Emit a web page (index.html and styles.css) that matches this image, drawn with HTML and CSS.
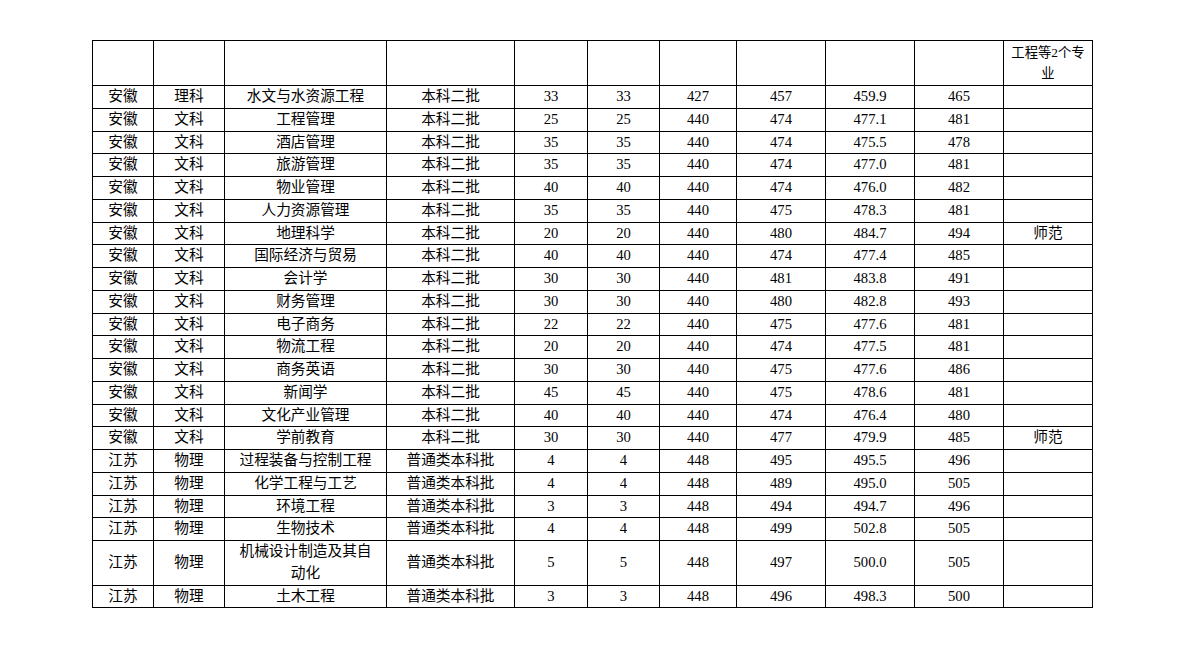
FILE: index.html
```html
<!DOCTYPE html>
<html lang="zh">
<head>
<meta charset="utf-8">
<title>录取分数表</title>
<link rel="stylesheet" href="styles.css">
</head>
<body>
<div class="page">
<table class="scores">
<colgroup>
<col class="c1"><col class="c2"><col class="c3"><col class="c4"><col class="c5"><col class="c6"><col class="c7"><col class="c8"><col class="c9"><col class="c10"><col class="c11">
</colgroup>
<tbody>
<tr class="head"><td></td><td></td><td></td><td></td><td></td><td></td><td></td><td></td><td></td><td></td><td class="note">工程等2个专<br>业</td></tr>
<tr><td>安徽</td><td>理科</td><td>水文与水资源工程</td><td>本科二批</td><td>33</td><td>33</td><td>427</td><td>457</td><td>459.9</td><td>465</td><td></td></tr>
<tr><td>安徽</td><td>文科</td><td>工程管理</td><td>本科二批</td><td>25</td><td>25</td><td>440</td><td>474</td><td>477.1</td><td>481</td><td></td></tr>
<tr><td>安徽</td><td>文科</td><td>酒店管理</td><td>本科二批</td><td>35</td><td>35</td><td>440</td><td>474</td><td>475.5</td><td>478</td><td></td></tr>
<tr><td>安徽</td><td>文科</td><td>旅游管理</td><td>本科二批</td><td>35</td><td>35</td><td>440</td><td>474</td><td>477.0</td><td>481</td><td></td></tr>
<tr><td>安徽</td><td>文科</td><td>物业管理</td><td>本科二批</td><td>40</td><td>40</td><td>440</td><td>474</td><td>476.0</td><td>482</td><td></td></tr>
<tr><td>安徽</td><td>文科</td><td>人力资源管理</td><td>本科二批</td><td>35</td><td>35</td><td>440</td><td>475</td><td>478.3</td><td>481</td><td></td></tr>
<tr><td>安徽</td><td>文科</td><td>地理科学</td><td>本科二批</td><td>20</td><td>20</td><td>440</td><td>480</td><td>484.7</td><td>494</td><td>师范</td></tr>
<tr><td>安徽</td><td>文科</td><td>国际经济与贸易</td><td>本科二批</td><td>40</td><td>40</td><td>440</td><td>474</td><td>477.4</td><td>485</td><td></td></tr>
<tr><td>安徽</td><td>文科</td><td>会计学</td><td>本科二批</td><td>30</td><td>30</td><td>440</td><td>481</td><td>483.8</td><td>491</td><td></td></tr>
<tr><td>安徽</td><td>文科</td><td>财务管理</td><td>本科二批</td><td>30</td><td>30</td><td>440</td><td>480</td><td>482.8</td><td>493</td><td></td></tr>
<tr><td>安徽</td><td>文科</td><td>电子商务</td><td>本科二批</td><td>22</td><td>22</td><td>440</td><td>475</td><td>477.6</td><td>481</td><td></td></tr>
<tr><td>安徽</td><td>文科</td><td>物流工程</td><td>本科二批</td><td>20</td><td>20</td><td>440</td><td>474</td><td>477.5</td><td>481</td><td></td></tr>
<tr><td>安徽</td><td>文科</td><td>商务英语</td><td>本科二批</td><td>30</td><td>30</td><td>440</td><td>475</td><td>477.6</td><td>486</td><td></td></tr>
<tr><td>安徽</td><td>文科</td><td>新闻学</td><td>本科二批</td><td>45</td><td>45</td><td>440</td><td>475</td><td>478.6</td><td>481</td><td></td></tr>
<tr><td>安徽</td><td>文科</td><td>文化产业管理</td><td>本科二批</td><td>40</td><td>40</td><td>440</td><td>474</td><td>476.4</td><td>480</td><td></td></tr>
<tr><td>安徽</td><td>文科</td><td>学前教育</td><td>本科二批</td><td>30</td><td>30</td><td>440</td><td>477</td><td>479.9</td><td>485</td><td>师范</td></tr>
<tr><td>江苏</td><td>物理</td><td>过程装备与控制工程</td><td>普通类本科批</td><td>4</td><td>4</td><td>448</td><td>495</td><td>495.5</td><td>496</td><td></td></tr>
<tr><td>江苏</td><td>物理</td><td>化学工程与工艺</td><td>普通类本科批</td><td>4</td><td>4</td><td>448</td><td>489</td><td>495.0</td><td>505</td><td></td></tr>
<tr><td>江苏</td><td>物理</td><td>环境工程</td><td>普通类本科批</td><td>3</td><td>3</td><td>448</td><td>494</td><td>494.7</td><td>496</td><td></td></tr>
<tr><td>江苏</td><td>物理</td><td>生物技术</td><td>普通类本科批</td><td>4</td><td>4</td><td>448</td><td>499</td><td>502.8</td><td>505</td><td></td></tr>
<tr class="tall"><td>江苏</td><td>物理</td><td>机械设计制造及其自<br>动化</td><td>普通类本科批</td><td>5</td><td>5</td><td>448</td><td>497</td><td>500.0</td><td>505</td><td></td></tr>
<tr><td>江苏</td><td>物理</td><td>土木工程</td><td>普通类本科批</td><td>3</td><td>3</td><td>448</td><td>496</td><td>498.3</td><td>500</td><td></td></tr>
</tbody>
</table>
</div>
</body>
</html>
```
FILE: styles.css
```css
html, body {
  margin: 0;
  padding: 0;
  background: #ffffff;
}

.page {
  padding: 40px 0 0 92px;
}

.scores {
  border-collapse: collapse;
  table-layout: fixed;
  width: 1000px;
  font-family: "Liberation Serif", "Noto Sans CJK SC", serif;
  font-size: 14.67px;
  color: #000;
}

.scores td {
  border: 1px solid #000;
  padding: 0;
  line-height: 21.75px;
  height: 21.75px;
  text-align: center;
  vertical-align: middle;
  white-space: nowrap;
  overflow: hidden;
}

.scores tr.head td {
  height: 44px;
}

.scores td.note {
  font-size: 13.33px;
  line-height: 21.5px;
}

.c1 { width: 61px; }
.c2 { width: 71px; }
.c3 { width: 162px; }
.c4 { width: 128px; }
.c5 { width: 73px; }
.c6 { width: 72px; }
.c7 { width: 77px; }
.c8 { width: 89px; }
.c9 { width: 89px; }
.c10 { width: 89px; }
.c11 { width: 89px; }
```
